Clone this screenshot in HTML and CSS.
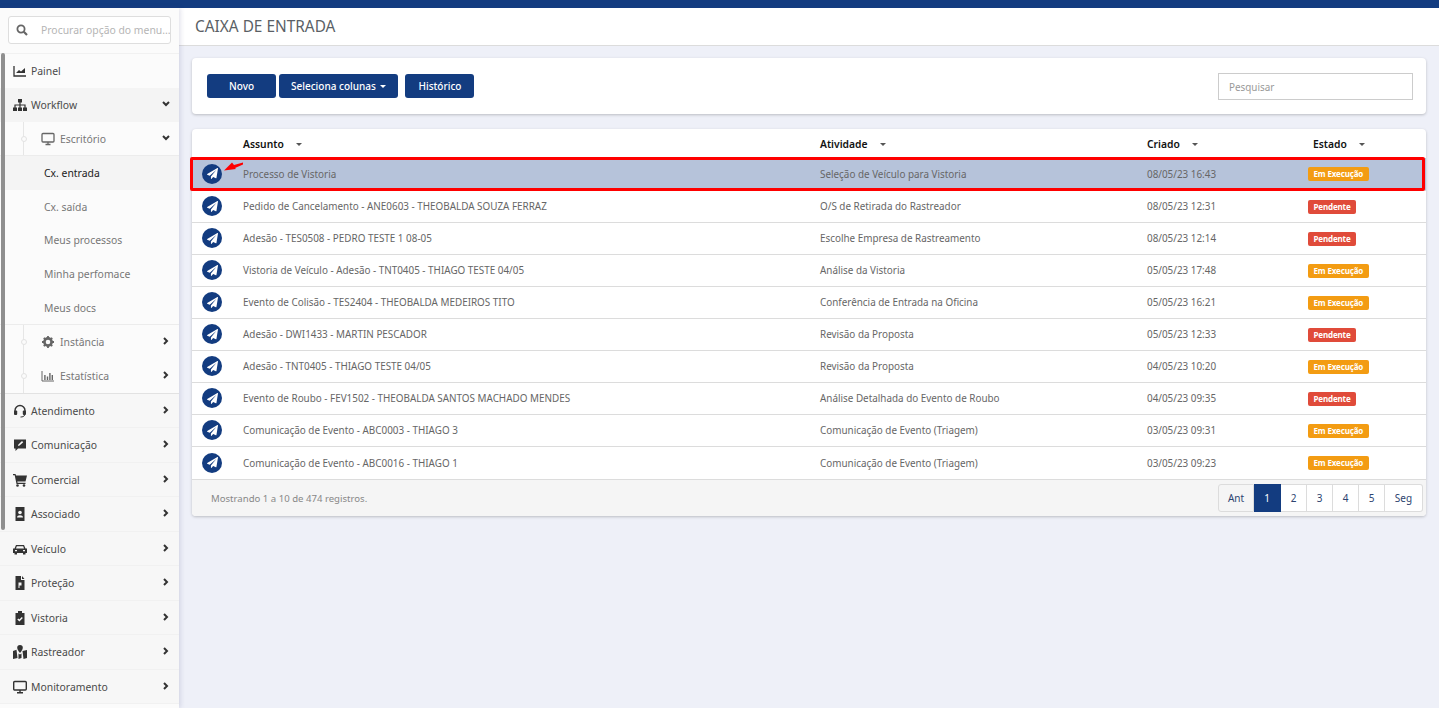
FILE: index.html
```html
<!DOCTYPE html>
<html lang="pt-BR">
<head>
    <meta charset="UTF-8">
    <title>Caixa de Entrada</title>
    <link rel="stylesheet" href="styles.css">
</head>
<body>
    <svg class="defs" width="0" height="0">
        <symbol id="plane" viewBox="0 0 1792 1792"><path d="M1764 11q33 24 27 64l-256 1536q-5 29-32 45-14 8-31 8-11 0-24-5l-453-185-242 295q-18 23-49 23-13 0-22-4-19-7-30.5-23.5t-11.5-36.5v-349l864-1059-1069 925-395-162q-37-14-40-55-2-40 32-59l1664-960q15-9 32-9 20 0 36 11z"/></symbol>
        <symbol id="right" viewBox="0 0 8 8"><path d="M2 1l3 3-3 3" fill="none" stroke="currentColor" stroke-width="2"/></symbol>
        <symbol id="down" viewBox="0 0 8 8"><path d="M1 2l3 3 3-3" fill="none" stroke="currentColor" stroke-width="2"/></symbol>
    </svg>

    <div class="topbar"></div>
    <div class="layout">
        <aside class="sidebar">
            <div class="scroll-thumb"></div>
            <div class="menu-search">
                <div class="menu-search-box">
                    <svg class="search-icon" viewBox="0 0 12 12"><circle cx="5" cy="5" r="3.6" fill="none" stroke="currentColor" stroke-width="1.8"/><path d="M7.8 7.8l3.2 3.2" stroke="currentColor" stroke-width="2.2"/></svg>
                    <span>Procurar opção do menu...</span>
                </div>
            </div>

            <div class="menu-item light">
                <svg class="icon" viewBox="0 0 14 14"><path d="M1 2v10h12" fill="none" stroke="currentColor" stroke-width="1.3"/><path d="M3 9l3-3 2 1.500L12 4v5H3z" fill="currentColor"/></svg>
                <span>Painel</span>
            </div>
            <div class="menu-item open">
                <svg class="icon" viewBox="0 0 14 14"><path d="M5 1h4v3.500H5zM0 9.500h4V13H0zM5 9.500h4V13H5zM10 9.500h4V13h-4z" fill="currentColor"/><path d="M7 4v6M2 10V7h10v3" fill="none" stroke="currentColor" stroke-width="1.200"/></svg>
                <span>Workflow</span>
                <svg class="caret"><use href="#down"/></svg>
            </div>

            <div class="submenu">
                <div class="sub-item sub-open">
                    <i class="dot"></i>
                    <svg class="icon sub-icon" viewBox="0 0 14 14"><rect x="1" y="1.500" width="12" height="8.500" rx="1" fill="none" stroke="currentColor" stroke-width="1.300"/><path d="M4.500 12.500h5M7 10v2.500" stroke="currentColor" stroke-width="1.300"/></svg>
                    <span>Escritório</span>
                    <svg class="caret"><use href="#down"/></svg>
                </div>
                <div class="leaf active">Cx. entrada</div>
                <div class="leaf">Cx. saída</div>
                <div class="leaf">Meus processos</div>
                <div class="leaf">Minha perfomace</div>
                <div class="leaf leaf-last">Meus docs</div>
                <div class="sub-item">
                    <i class="dot"></i>
                    <svg class="icon sub-icon" viewBox="0 0 14 14"><circle cx="7" cy="7" r="3.600" fill="none" stroke="currentColor" stroke-width="2.600"/><path d="M7 1v2.500M7 10.500V13M1 7h2.500M10.500 7H13M2.800 2.800l1.800 1.800M9.400 9.400l1.800 1.800M11.200 2.800L9.400 4.600M4.600 9.400l-1.800 1.800" stroke="currentColor" stroke-width="1.800"/></svg>
                    <span>Instância</span>
                    <svg class="caret"><use href="#right"/></svg>
                </div>
                <div class="sub-item">
                    <i class="dot"></i>
                    <svg class="icon sub-icon" viewBox="0 0 14 14"><path d="M1 2v10h12" fill="none" stroke="currentColor"/><path d="M3.200 6h1.400v5H3.200zM5.800 7.500h1.400V11H5.800zM8.200 4h1.400v7H8.200zM10.600 6h1.400v5h-1.400z" fill="currentColor"/></svg>
                    <span>Estatística</span>
                    <svg class="caret"><use href="#right"/></svg>
                </div>
            </div>

            <div class="menu-group">
                <div class="menu-item">
                    <svg class="icon" viewBox="0 0 14 14"><path d="M2 8V6.500a5 5 0 0110 0V8" fill="none" stroke="currentColor" stroke-width="1.400"/><rect x="1" y="6.500" width="3.200" height="4.500" rx="1" fill="currentColor"/><rect x="9.800" y="6.500" width="3.200" height="4.500" rx="1" fill="currentColor"/><path d="M11.500 11c0 1.500-2 2-4 2" fill="none" stroke="currentColor"/></svg>
                    <span>Atendimento</span>
                    <svg class="caret"><use href="#right"/></svg>
                </div>
                <div class="menu-item">
                    <svg class="icon" viewBox="0 0 14 14"><path d="M1 1.500h12v9H5L2.500 13v-2.500H1z" fill="currentColor"/><path d="M5 8l.4-1.600L9 3l1.200 1.200L6.600 7.600z" fill="#f7f7f7"/></svg>
                    <span>Comunicação</span>
                    <svg class="caret"><use href="#right"/></svg>
                </div>
                <div class="menu-item">
                    <svg class="icon" viewBox="0 0 14 14"><path d="M0 1h2.500l.5 1.500H14l-1.500 6H4.300l.3 1.200H12.500v1.300H3.500L1.700 2.300H0z" fill="currentColor"/><circle cx="4.500" cy="12.500" r="1.300" fill="currentColor"/><circle cx="11" cy="12.500" r="1.300" fill="currentColor"/></svg>
                    <span>Comercial</span>
                    <svg class="caret"><use href="#right"/></svg>
                </div>
                <div class="menu-item">
                    <svg class="icon" viewBox="0 0 14 14"><path d="M2.500 0h9v14h-9z" fill="currentColor"/><circle cx="7" cy="5.500" r="1.800" fill="#f7f7f7"/><path d="M4 10.500c0-3 6-3 6 0z" fill="#f7f7f7"/></svg>
                    <span>Associado</span>
                    <svg class="caret"><use href="#right"/></svg>
                </div>
                <div class="menu-item">
                    <svg class="icon" viewBox="0 0 14 14"><path d="M3 3h8l1.500 3.500H14V11h-1.500v1.500H10V11H4v1.500H1.500V11H0V6.500h1.500z" fill="currentColor"/><path d="M3.800 4.300h6.400l.8 2.200H3zM2 8h2v1.300H2zM10 8h2v1.300h-2z" fill="#f7f7f7"/></svg>
                    <span>Veículo</span>
                    <svg class="caret"><use href="#right"/></svg>
                </div>
                <div class="menu-item">
                    <svg class="icon" viewBox="0 0 14 14"><path d="M2.500 0H8v4h3.500v10h-9zM9 0l2.500 3H9z" fill="currentColor"/><path d="M5.500 6.500h3v3h-2V12h-1z" fill="#f7f7f7"/></svg>
                    <span>Proteção</span>
                    <svg class="caret"><use href="#right"/></svg>
                </div>
                <div class="menu-item">
                    <svg class="icon" viewBox="0 0 14 14"><path d="M2.500 2H5V0h4v2h2.500v12h-9z" fill="currentColor"/><path d="M4.800 8l1.600 1.600 2.900-3" fill="none" stroke="#f7f7f7" stroke-width="1.400"/></svg>
                    <span>Vistoria</span>
                    <svg class="caret"><use href="#right"/></svg>
                </div>
                <div class="menu-item">
                    <svg class="icon" viewBox="0 0 14 14"><path d="M7 0a2.800 2.800 0 012.800 2.800C9.800 5 7 8 7 8S4.200 5 4.200 2.800A2.800 2.800 0 017 0z" fill="currentColor"/><path d="M0 6l3.500-1.200L4.500 13 0 14zM5.500 8.500l1.500 1 1.500-1V13l-3 1zM9.500 6l4.500-1v8l-3.500 1z" fill="currentColor"/></svg>
                    <span>Rastreador</span>
                    <svg class="caret"><use href="#right"/></svg>
                </div>
                <div class="menu-item">
                    <svg class="icon" viewBox="0 0 14 14"><rect x="0.700" y="1.500" width="12.600" height="8.500" rx="1" fill="none" stroke="currentColor" stroke-width="1.400"/><path d="M4 12.800h6M7 10v2.800" stroke="currentColor" stroke-width="1.400"/></svg>
                    <span>Monitoramento</span>
                    <svg class="caret"><use href="#right"/></svg>
                </div>
            </div>
        </aside>

        <main class="main">
            <header class="page-header">CAIXA DE ENTRADA</header>
            <div class="content">
                <section class="card toolbar">
                    <div class="buttons">
                        <button class="btn btn-wide">Novo</button>
                        <button class="btn">Seleciona colunas <i class="btn-caret"></i></button>
                        <button class="btn btn-wide gap">Histórico</button>
                    </div>
                    <div class="search">Pesquisar</div>
                </section>

                <section class="card list">
                    <table class="tasks">
                        <colgroup>
                            <col class="col-icon"><col class="col-subject"><col class="col-activity"><col class="col-date"><col>
                        </colgroup>
                        <thead>
                            <tr>
                                <th></th>
                                <th>Assunto<i class="sort"></i></th>
                                <th>Atividade<i class="sort"></i></th>
                                <th>Criado<i class="sort"></i></th>
                                <th class="th-state">Estado<i class="sort"></i></th>
                            </tr>
                        </thead>
                        <tbody>
                            <tr class="selected">
                                <td><span class="send"><svg><use href="#plane"/></svg></span></td>
                                <td>Processo de Vistoria</td>
                                <td>Seleção de Veículo para Vistoria</td>
                                <td>08/05/23 16:43</td>
                                <td><span class="badge running">Em Execução</span></td>
                            </tr>
                            <tr>
                                <td><span class="send"><svg><use href="#plane"/></svg></span></td>
                                <td>Pedido de Cancelamento - ANE0603 - THEOBALDA SOUZA FERRAZ</td>
                                <td>O/S de Retirada do Rastreador</td>
                                <td>08/05/23 12:31</td>
                                <td><span class="badge pending">Pendente</span></td>
                            </tr>
                            <tr>
                                <td><span class="send"><svg><use href="#plane"/></svg></span></td>
                                <td>Adesão - TES0508 - PEDRO TESTE 1 08-05</td>
                                <td>Escolhe Empresa de Rastreamento</td>
                                <td>08/05/23 12:14</td>
                                <td><span class="badge pending">Pendente</span></td>
                            </tr>
                            <tr>
                                <td><span class="send"><svg><use href="#plane"/></svg></span></td>
                                <td>Vistoria de Veículo - Adesão - TNT0405 - THIAGO TESTE 04/05</td>
                                <td>Análise da Vistoria</td>
                                <td>05/05/23 17:48</td>
                                <td><span class="badge running">Em Execução</span></td>
                            </tr>
                            <tr>
                                <td><span class="send"><svg><use href="#plane"/></svg></span></td>
                                <td>Evento de Colisão - TES2404 - THEOBALDA MEDEIROS TITO</td>
                                <td>Conferência de Entrada na Oficina</td>
                                <td>05/05/23 16:21</td>
                                <td><span class="badge running">Em Execução</span></td>
                            </tr>
                            <tr>
                                <td><span class="send"><svg><use href="#plane"/></svg></span></td>
                                <td>Adesão - DWI1433 - MARTIN PESCADOR</td>
                                <td>Revisão da Proposta</td>
                                <td>05/05/23 12:33</td>
                                <td><span class="badge pending">Pendente</span></td>
                            </tr>
                            <tr>
                                <td><span class="send"><svg><use href="#plane"/></svg></span></td>
                                <td>Adesão - TNT0405 - THIAGO TESTE 04/05</td>
                                <td>Revisão da Proposta</td>
                                <td>04/05/23 10:20</td>
                                <td><span class="badge running">Em Execução</span></td>
                            </tr>
                            <tr>
                                <td><span class="send"><svg><use href="#plane"/></svg></span></td>
                                <td>Evento de Roubo - FEV1502 - THEOBALDA SANTOS MACHADO MENDES</td>
                                <td>Análise Detalhada do Evento de Roubo</td>
                                <td>04/05/23 09:35</td>
                                <td><span class="badge pending">Pendente</span></td>
                            </tr>
                            <tr>
                                <td><span class="send"><svg><use href="#plane"/></svg></span></td>
                                <td>Comunicação de Evento - ABC0003 - THIAGO 3</td>
                                <td>Comunicação de Evento (Triagem)</td>
                                <td>03/05/23 09:31</td>
                                <td><span class="badge running">Em Execução</span></td>
                            </tr>
                            <tr class="last">
                                <td><span class="send"><svg><use href="#plane"/></svg></span></td>
                                <td>Comunicação de Evento - ABC0016 - THIAGO 1</td>
                                <td>Comunicação de Evento (Triagem)</td>
                                <td>03/05/23 09:23</td>
                                <td><span class="badge running">Em Execução</span></td>
                            </tr>
                        </tbody>
                    </table>

                    <div class="list-footer">
                        <span>Mostrando 1 a 10 de 474 registros.</span>
                        <div class="pager">
                            <a class="prev">Ant</a>
                            <a class="current">1</a>
                            <a>2</a>
                            <a>3</a>
                            <a>4</a>
                            <a>5</a>
                            <a class="next">Seg</a>
                        </div>
                    </div>

                    <!-- marcacao vermelha sobre a primeira linha -->
                    <div class="highlight"></div>
                    <svg class="arrow" viewBox="0 0 20 10"><path d="M0 8.500L8 .5 10 3l9-2.500v2L11 6l1 1z" fill="#f00"/></svg>
                </section>
            </div>
        </main>
    </div>
</body>
</html>
```

FILE: styles.css
```css
* {
    box-sizing: border-box;
}

body {
    margin: 0;
    height: 100vh;
    overflow: hidden;
    font-family: "Noto Sans", Arial, sans-serif;
    font-size: 9.9px;
    color: #595959;
    background: #eef0f8;
}

.defs {
    position: absolute;
}

.topbar {
    height: 8px;
    background: #133c80;
}

.layout {
    display: flex;
    height: 700px;
}

/* sidebar */
.sidebar {
    position: relative;
    flex: none;
    width: 179px;
    height: 700px;
    overflow: hidden;
    background: #fbfbfb;
    box-shadow: 1px 0 5px rgba(60, 60, 120, 0.18);
    font-size: 10.4px;
}

.scroll-thumb {
    position: absolute;
    z-index: 1;
    left: 1px;
    top: 45px;
    width: 4px;
    height: 477px;
    border-radius: 2px;
    background: #8f8f8f;
}

.menu-search {
    height: 46px;
    padding: 8px 8px 0;
    border-bottom: 1px solid #f1f1f1;
}

.menu-search-box {
    display: flex;
    align-items: center;
    height: 28px;
    padding-left: 7px;
    background: #fff;
    border: 1px solid #dedede;
    border-radius: 3px;
    color: #b5b5b5;
    font-size: 10.4px;
    white-space: nowrap;
    overflow: hidden;
}

.search-icon {
    flex: none;
    width: 12px;
    height: 12px;
    margin-right: 13px;
    color: #666;
}

.menu-item, .sub-item {
    display: flex;
    align-items: center;
    position: relative;
    padding-left: 13px;
    height: 34.5px;
    color: #4a4a4a;
    border-bottom: 1px solid #f1f1f1;
}

.menu-item span {
    margin-left: 4px;
}

.menu-item.light {
    height: 34px;
    background: #fbfbfb;
    border: 0;
}

.menu-item.open {
    height: 34px;
    background: #f4f4f4;
    border: 0;
}

.icon {
    flex: none;
    width: 14px;
    height: 14px;
    color: #333;
}

.caret {
    position: absolute;
    right: 9px;
    top: 12px;
    width: 8px;
    height: 8px;
    color: #333;
}

.submenu {
    background-color: #fbfbfb;
    background-image: linear-gradient(#e6e6e6, #e6e6e6);
    background-repeat: no-repeat;
    background-position: 23px 0;
    background-size: 1px 100%;
}

.sub-item {
    height: 34px;
    padding-left: 41px;
    color: #777;
    border: 0;
}

.sub-item span {
    margin-left: 5px;
}

.sub-open {
    border-bottom: 1px solid #ececec;
}

.sub-icon {
    color: #666;
}

.dot {
    position: absolute;
    left: 21px;
    top: 14px;
    width: 6px;
    height: 6px;
    background: #fbfbfb;
    border: 1px solid #e2e2e2;
    border-radius: 50%;
}

.leaf {
    display: flex;
    align-items: center;
    height: 33.8px;
    padding-left: 44px;
    color: #777;
    background: #fbfbfb;
}

.leaf.active {
    background: #f4f4f4;
    color: #222;
}

.leaf-last {
    border-bottom: 1px solid #ececec;
}

.menu-group {
    background: #f7f7f7;
    border-top: 1px solid #e2e2e2;
}

/* main */
.main {
    flex: 1;
    min-width: 0;
}

.page-header {
    display: flex;
    align-items: center;
    height: 38px;
    padding-left: 16px;
    background: #fff;
    border-bottom: 1px solid #dcdcdc;
    font-size: 15.4px;
    color: #5a5f66;
}

.content {
    padding: 12px 13px 0 13px;
}

.card {
    background: #fff;
    border-radius: 4px;
    box-shadow: 0 1px 3px rgba(0, 0, 0, 0.22);
}

.toolbar {
    display: flex;
    align-items: center;
    justify-content: space-between;
    height: 56px;
    padding: 0 13px 0 15px;
    margin-bottom: 15px;
}

.buttons {
    display: flex;
    gap: 3px;
}

.btn {
    height: 24px;
    padding: 0 12px;
    border: 0;
    border-radius: 3px;
    background: #133c80;
    color: #fff;
    font-family: inherit;
    font-size: 10px;
    font-weight: 500;
}

.btn-wide {
    width: 69px;
    padding: 0;
}

.gap {
    margin-left: 4px;
}

.btn-caret {
    display: inline-block;
    margin-left: 2px;
    vertical-align: 2px;
    border: 3px solid transparent;
    border-top-color: #fff;
    border-bottom: 0;
}

.search {
    display: flex;
    align-items: center;
    width: 195px;
    height: 27px;
    padding: 1px 0 0 10px;
    border: 1px solid #ccc;
    color: #999;
}

.list {
    position: relative;
    height: 387px;
}

.tasks {
    width: 100%;
    border-collapse: collapse;
    table-layout: fixed;
}

.col-icon {
    width: 41px;
}

.col-subject {
    width: 577px;
}

.col-activity {
    width: 327px;
}

.col-date {
    width: 161px;
}

.tasks th {
    height: 29px;
    padding: 0 0 0 10px;
    text-align: left;
    font-size: 10.3px;
    font-weight: 600;
    color: #111;
}

.tasks th.th-state {
    padding-left: 15px;
}

.sort {
    display: inline-block;
    margin-left: 12px;
    vertical-align: 2px;
    border: 3.5px solid transparent;
    border-top-color: #555;
    border-bottom: 0;
}

.tasks td {
    height: 32px;
    padding: 0 0 0 10px;
    border-top: 1px solid #dcdcdc;
    white-space: nowrap;
    color: #666;
}

.tasks .last td {
    height: 33px;
}

.tasks .selected td {
    background: #b6c3da;
    border-top: 0;
}

.send {
    display: flex;
    align-items: center;
    justify-content: center;
    width: 20px;
    height: 20px;
    border-radius: 50%;
    background: #133c80;
}

.send svg {
    width: 11px;
    height: 11px;
    fill: #fff;
}

.badge {
    display: inline-block;
    height: 14px;
    line-height: 14px;
    padding: 0 5.5px;
    border-radius: 2px;
    font-size: 8px;
    font-weight: 700;
    letter-spacing: -0.15px;
    color: #fff;
}

.running {
    background: #f39c12;
}

.pending {
    background: #e04b3a;
}

.list-footer {
    display: flex;
    align-items: center;
    justify-content: space-between;
    height: 37px;
    padding: 0 3px 0 19px;
    background: #f5f5f5;
    border-top: 1px solid #dcdcdc;
    border-radius: 0 0 4px 4px;
    font-size: 9.6px;
    color: #888;
}

.pager {
    display: flex;
    height: 28px;
    font-size: 10px;
    color: #2d4470;
}

.pager a {
    display: flex;
    align-items: center;
    justify-content: center;
    width: 26px;
    background: #fff;
    border: 1px solid #dcdcdc;
    border-left: 0;
}

.pager .prev {
    width: 36px;
    background: #f5f5f5;
    border-left: 1px solid #dcdcdc;
    border-radius: 3px 0 0 3px;
}

.pager .current {
    width: 27px;
    background: #133c80;
    border-color: #133c80;
    color: #fff;
}

.pager .next {
    width: 38px;
    border-radius: 0 3px 3px 0;
}

.highlight {
    position: absolute;
    left: -2px;
    top: 28px;
    width: 1235px;
    height: 34px;
    border: 3px solid #f00;
    border-radius: 2px;
}

.arrow {
    position: absolute;
    left: 32px;
    top: 33px;
    width: 20px;
    height: 10px;
}
```
